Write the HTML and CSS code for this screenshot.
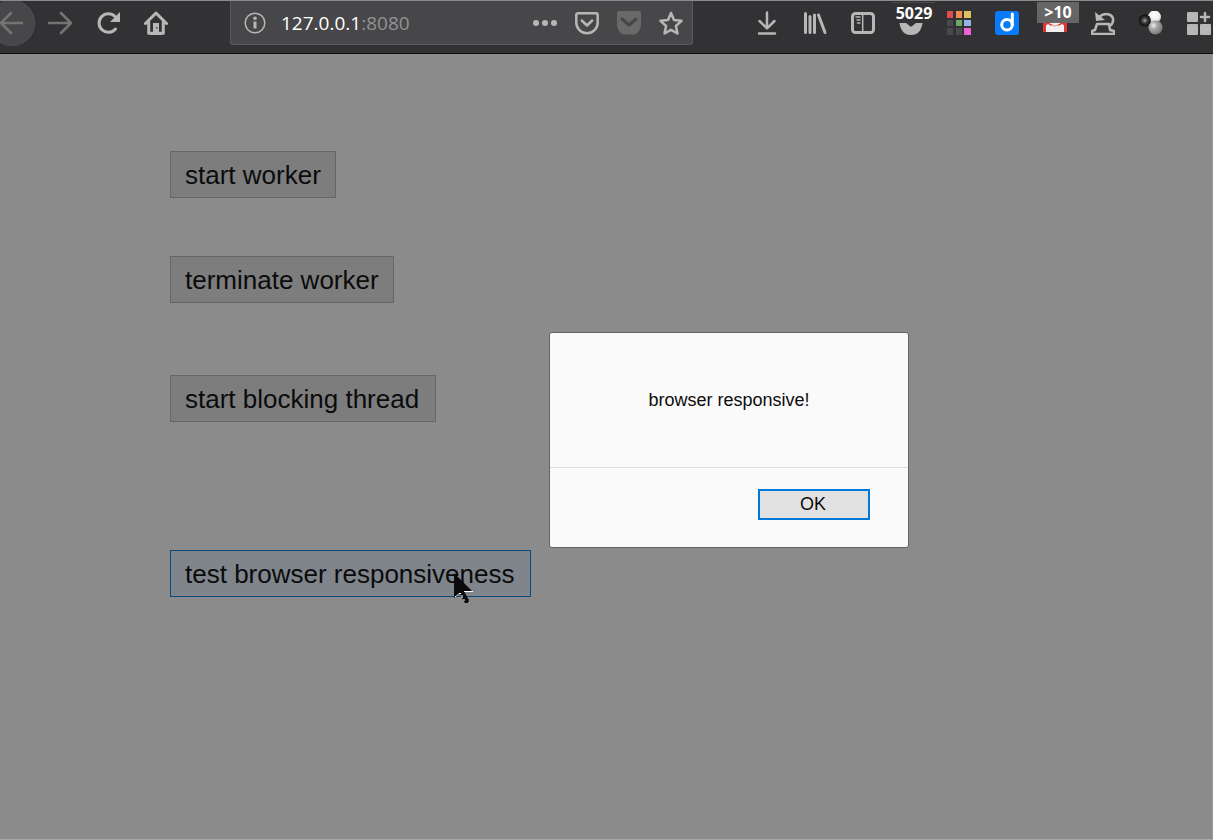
FILE: index.html
```html
<!DOCTYPE html>
<html lang="en">
<head>
<meta charset="utf-8">
<title>127.0.0.1:8080</title>
<link rel="stylesheet" href="styles.css">
</head>
<body>
<header class="toolbar">
  <nav class="group nav" aria-label="Navigation">
    <button class="tool back" aria-label="Back"><svg class="icon dim" viewBox="0 0 24 24"><path d="M1 12h21M11 2 1 12l10 10"/></svg></button>
    <button class="tool" aria-label="Forward"><svg class="icon dim" viewBox="0 0 24 24"><path d="M1 12h21M13 2l10 10-10 10"/></svg></button>
    <button class="tool" aria-label="Reload"><svg class="icon heavy" viewBox="0 0 24 24"><path d="M19.500 18A9.300 9.300 0 1 1 19 5.500"/><path class="solid" d="M24 1v10H14l3.500-3.500 3-3z"/></svg></button>
    <button class="tool" aria-label="Home"><svg class="icon heavy" viewBox="0 0 24 24"><path d="M1.500 12.500 12 2l10.500 10.500M4.700 11v11.300h14.600V11"/><path class="solid" d="M9 12h6v10h3v2H6v-2h3z"/><path class="knob" d="M12.300 16h1.200v1.500h-1.200z"/></svg></button>
  </nav>

  <div class="urlbar">
    <button class="tool small" aria-label="Site information"><svg class="icon thin" viewBox="0 0 24 24"><circle cx="12" cy="12" r="9.800"/><path class="heavyline" d="M12 10.500v7"/><circle class="solid" cx="12" cy="7.300" r="1.800"/></svg></button>
    <div class="address"><span class="host">127.0.0.1</span>:8080</div>
    <button class="tool small" aria-label="Page actions"><svg class="icon" viewBox="0 0 24 24"><g class="solid"><circle cx="3" cy="12" r="3"/><circle cx="12" cy="12" r="3"/><circle cx="21" cy="12" r="3"/></g></svg></button>
    <button class="tool small" aria-label="Save to Pocket"><svg class="icon" viewBox="0 0 24 24"><path d="M3 2.300h18q1.700 0 1.700 1.700v7.500a10.700 10.700 0 0 1-21.400 0V4Q1.300 2.300 3 2.300zM6.800 9.500l5.200 5 5.200-5"/></svg></button>
    <button class="tool small" aria-label="Pocket list"><svg class="icon" viewBox="0 0 24 24"><path class="shade" d="M2 0h20q2 0 2 2v9a13 13 0 0 1-6 12.500H6A13 13 0 0 1 0 11V2q0-2 2-2z"/><path class="notch" d="m5 8 7 6 7-6"/></svg></button>
    <button class="tool small" aria-label="Bookmark this page"><svg class="icon" viewBox="0 0 24 24"><path d="m12 2 3 7 7.500.8-5.600 5.200 1.600 7.500L12 18.800l-6.500 3.700L7.100 15 1.500 9.800 9 9z"/></svg></button>
  </div>

  <div class="group extras">
    <button class="tool" aria-label="Downloads"><svg class="icon" viewBox="0 0 24 24"><path d="M12 1.500v15M4.500 10l7.500 7.300L19.500 10M4 22.500h16"/></svg></button>
    <button class="tool" aria-label="Library"><svg class="icon heavy" viewBox="0 0 24 24"><path d="M2.500 2.500v19M7 5.500v16M11.500 4v17.500M15.500 4l6.500 17.500"/></svg></button>
    <button class="tool" aria-label="Sidebars"><svg class="icon heavy" viewBox="0 0 24 24"><rect x="1.500" y="2.500" width="21" height="19" rx="3"/><path class="fine" d="M11.700 3v18M5 6h4M6 9h3M6.500 12H9"/></svg></button>
    <button class="tool" aria-label="Pocket, 5029 items"><svg class="icon" viewBox="0 0 24 24"><path class="solid" d="M0 9h24c-1 9-4 15-12 15S1 18 0 9z"/><path class="cut" d="m7 10 5 4 5-4"/></svg><span class="badge plain">5029</span></button>
    <button class="tool" aria-label="Color grid"><svg class="icon" viewBox="0 0 24 24"><g class="tiles"><path fill="#e34b4d" d="M0 0h6v7H0z"/><path fill="#f58c4c" d="M9 0h6v7H9z"/><path fill="#dcbf60" d="M17 0h7v7h-7z"/><path fill="#49494b" d="M0 9h6v6H0zM0 17h6v7H0zM9 17h6v7H9z"/><path fill="#6aa968" d="M9 9h6v6H9z"/><path fill="#91b5e7" d="M17 9h7v6h-7z"/><path fill="#ed63d8" d="M17 17h7v7h-7z"/></g></svg></button>
    <button class="tool" aria-label="Document manager"><svg class="icon" viewBox="0 0 24 24"><rect class="blue" width="24" height="24" rx="3"/><circle class="dbowl" cx="12" cy="13.800" r="5.300"/><path class="dbowl" d="M17.300 3v10.800"/></svg></button>
    <button class="tool" aria-label="Mail, more than 10 unread"><svg class="icon" viewBox="0 0 24 24"><path fill="#f1efef" stroke="none" d="M0 5h24v16H0z"/><path fill="#de3635" stroke="none" d="M0 5h3v16H0zM21 5h3v16h-3zM2 10l10 5 10-5v5l-3-2-7 4-7-4-3 2z"/><path fill="#f1efef" stroke="none" d="m4 20 5-6 3 1.500 3-1.500 5 6z"/></svg><span class="badge">&gt;10</span></button>
    <button class="tool" aria-label="Undo close tab"><svg class="icon" viewBox="0 0 24 24"><path d="M8 6c7-6 15-2 14 4-.3 2-1 3-2 4M6 13h12l1 6 4 1v3H1v-3l3-1z"/><path class="solid" d="m4 1 1 9 9-1z"/></svg></button>
    <button class="tool" aria-label="Molecule"><svg class="icon" viewBox="0 0 24 24">
      <defs>
        <radialGradient id="white" cx=".5" cy=".35" r=".65"><stop offset="0" stop-color="#fff"/><stop offset=".6" stop-color="#eee"/><stop offset="1" stop-color="#aaa"/></radialGradient>
        <radialGradient id="black" cx=".5" cy=".5"><stop offset="0" stop-color="#aaa"/><stop offset=".4" stop-color="#444"/><stop offset="1" stop-color="#080808"/></radialGradient>
        <radialGradient id="gray" cx=".35" cy=".35" r=".7"><stop offset="0" stop-color="#eee"/><stop offset=".4" stop-color="#a5a5a5"/><stop offset="1" stop-color="#777"/></radialGradient>
      </defs>
      <g stroke="none"><circle cx="15.500" cy="6" r="6.500" fill="url(#white)"/><circle cx="5.800" cy="9.500" r="6" fill="url(#black)"/><circle cx="16.500" cy="16.500" r="7" fill="url(#gray)"/></g></svg></button>
    <button class="tool" aria-label="Customize toolbar"><svg class="icon" viewBox="0 0 24 24"><g class="solid"><rect x="0" y="1" width="11" height="10" rx="1"/><rect x="0" y="13" width="11" height="11" rx="1"/><rect x="13" y="13" width="11" height="11" rx="1"/></g><path d="M18 2v8M14 6h8"/></svg></button>
  </div>
</header>

<main class="page">
  <button class="action">start worker</button>
  <button class="action terminate">terminate worker</button>
  <button class="action wide blocking">start blocking thread</button>
  <button class="action wide test">test browser responsiveness
    <svg class="cursor" viewBox="0 0 20 31" aria-hidden="true"><path fill="#0b0b0b" d="M0 0l18 18h-8l2 4 3 5-1 3h-3l-2-3-3-6-6 4z"/><path fill="none" stroke="#fff" d="M10 18.500h9M1 23.500h1l3-3h2M8 22v3M10 26v2"/></svg>
  </button>

  <dialog class="alert" open aria-labelledby="message">
    <p class="message" id="message">browser responsive!</p>
    <div class="footer"><button class="ok">OK</button></div>
  </dialog>
</main>
</body>
</html>
```

FILE: styles.css
```css
* {
  box-sizing: border-box;
}

body {
  display: flex;
  flex-direction: column;
  min-height: 100vh;
  margin: 0;
  overflow: hidden;
  background: #8b8b8b;
  font-family: "Liberation Sans", Arial, sans-serif;
}

button {
  font: inherit;
  color: inherit;
}

.toolbar {
  display: flex;
  align-items: flex-start;
  height: 54px;
  overflow: hidden;
  background: #323234;
  border-top: 1px solid #8b8b8b;
  border-bottom: 1px solid #0c0c0d;
}

.group {
  display: flex;
  flex: none;
}

.nav {
  margin-left: -12px;
}

.extras {
  margin-right: -10px;
}

.tool {
  position: relative;
  display: flex;
  flex: none;
  align-items: center;
  justify-content: center;
  width: 48px;
  height: 44px;
  padding: 0;
  border: 0;
  background: none;
}

.small {
  width: 42px;
}

.back {
  height: 46px;
  margin-top: -1px;
  background: radial-gradient(circle at 50% 50%, #474749 23px, #29292b 24px, transparent 25px);
}

.icon {
  width: 24px;
  height: 24px;
  fill: none;
  stroke: #b7b7b7;
  stroke-width: 2.5;
  stroke-linecap: round;
  stroke-linejoin: round;
}

.dim {
  stroke: #747475;
}

.heavy {
  stroke-width: 3;
}

.thin {
  stroke-width: 1.5;
}

.heavyline {
  stroke-width: 3;
  stroke-linecap: butt;
}

.fine {
  stroke-width: 1.5;
}

.solid {
  fill: #b7b7b7;
  stroke: none;
}

.knob {
  fill: #323234;
  stroke: none;
}

.shade {
  fill: #69696a;
  stroke: none;
}

.notch {
  stroke: #474749;
  stroke-width: 3;
}

.cut {
  stroke: #323234;
  stroke-width: 3;
}

.tiles {
  stroke: none;
}

.blue {
  fill: #077bf9;
  stroke: none;
}

.dbowl {
  stroke: #fff;
  stroke-width: 3;
}

.urlbar {
  display: flex;
  flex: 1;
  align-items: center;
  min-width: 0;
  height: 44px;
  margin: 0 50px;
  padding-left: 3px;
  background: #474749;
  border: 1px solid #5a5a5c;
  border-top: 0;
  border-radius: 0 0 3px 3px;
}

.address {
  flex: 1;
  padding-left: 5px;
  color: #929293;
  font: 19px/28px "Open Sans", "Noto Sans", sans-serif;
}

.host {
  color: #fff;
}

.badge {
  position: absolute;
  top: 1px;
  right: 0;
  width: 42px;
  height: 21px;
  background: #666;
  color: #fff;
  font: bold 16px/21px "Open Sans", "Noto Sans", sans-serif;
  text-align: center;
}

.plain {
  background: #323234;
  border-top: 1px solid #49494b;
  line-height: 20px;
}

.page {
  position: relative;
  display: flex;
  flex: 1;
  flex-direction: column;
  align-items: flex-start;
  padding: 97px 170px 0;
  border-right: 1px solid #989898;
  border-bottom: 1px solid #a8a8a8;
}

.action {
  position: relative;
  height: 47px;
  padding: 0 14px;
  background: #7d7d7d;
  border: 1px solid #666;
  color: #0b0b0b;
  font-size: 26px;
  line-height: 30px;
}

.wide {
  padding: 0 16px 0 14px;
}

.terminate {
  margin-top: 58px;
}

.blocking {
  margin-top: 72px;
}

.test {
  margin-top: 128px;
  background: #7f858b;
  border-color: #0b4a7c;
}

.cursor {
  position: absolute;
  top: 22px;
  left: 283px;
  width: 20px;
  height: 31px;
}

.alert {
  position: absolute;
  top: 278px;
  left: 549px;
  width: 360px;
  margin: 0;
  padding: 0;
  background: #fafafa;
  border: 1px solid #646464;
  border-radius: 3px;
  color: #0c0c0d;
  font-size: 18px;
  line-height: 22px;
}

.message {
  margin: 0;
  padding: 56px 20px;
  text-align: center;
}

.footer {
  display: flex;
  justify-content: flex-end;
  padding: 21px 38px 27px;
  border-top: 1px solid #dedede;
}

.ok {
  width: 112px;
  height: 31px;
  padding: 0 2px 2px 0;
  background: #e1e1e1;
  border: 2px solid #0078d7;
}
```
